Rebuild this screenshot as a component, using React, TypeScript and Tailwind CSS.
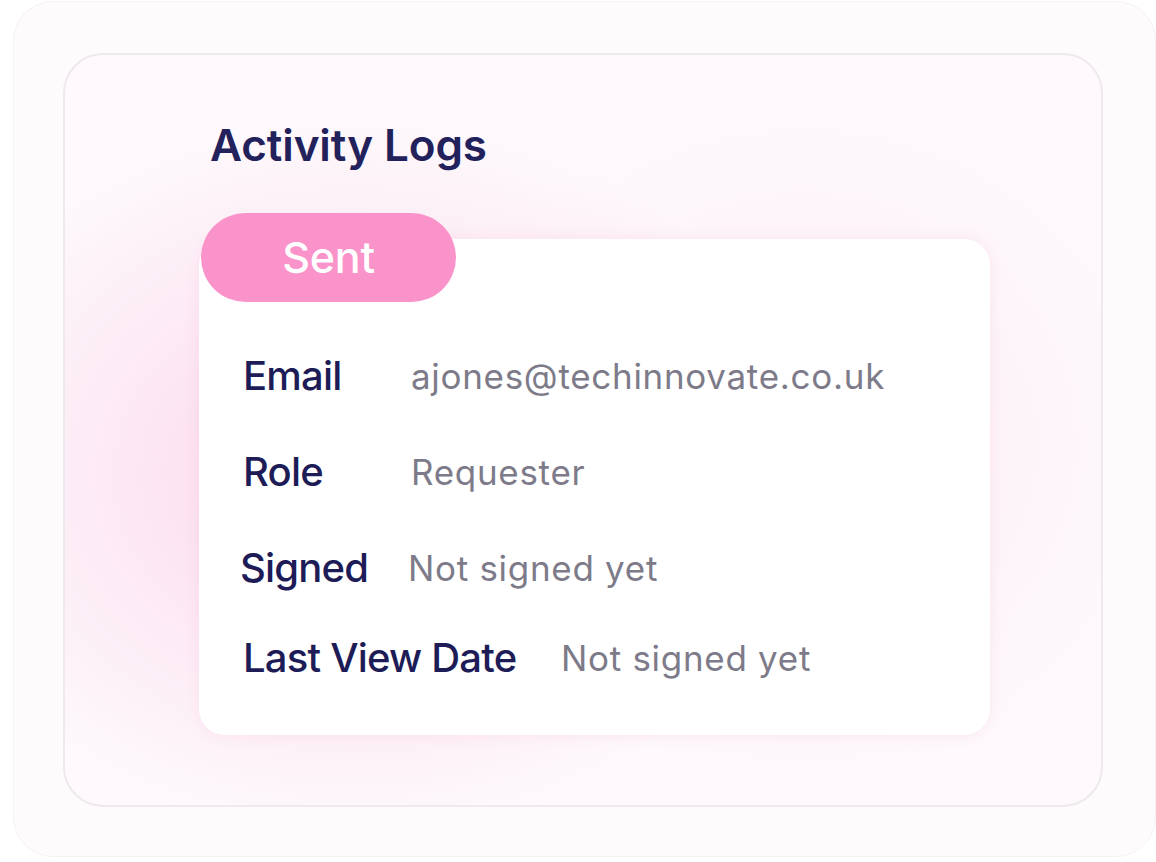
const rows = [
  { label: 'Email', value: 'ajones@techinnovate.co.uk', labelCls: 'w-[171px] pl-[3px]', rowCls: 'h-[96px]' },
  { label: 'Role', value: 'Requester', labelCls: 'w-[171px] pl-[3px]', rowCls: 'h-[96px]' },
  { label: 'Signed', value: 'Not signed yet', labelCls: 'w-[168px]', rowCls: 'h-[96px]' },
  { label: 'Last View Date', value: 'Not signed yet', labelCls: 'w-[321px] pl-[3px]', rowCls: 'h-[84px]' },
];

export default function App() {
  return (
    <div className="w-[1156px] h-[862px] bg-white pl-[13px] pt-[1px] font-['Inter','Liberation_Sans',sans-serif]">
      <div className="w-[1143px] h-[856px] rounded-[40px] border border-[#f6f1f4] bg-[#fefbfd] pl-[49px] pt-[51px]">
        <div className="relative w-[1040px] h-[754px] rounded-[40px] border-2 border-[#efe9ed] bg-[#fdf9fc] overflow-hidden">
          {/* pink glow behind card */}
          <div className="absolute left-[-160px] top-[60px] w-[900px] h-[720px] rounded-full bg-[radial-gradient(closest-side,rgba(251,200,226,0.75),rgba(252,214,234,0.45)_55%,rgba(253,240,247,0)_100%)]" />
          <div className="absolute left-[360px] top-[40px] w-[760px] h-[700px] rounded-full bg-[radial-gradient(closest-side,rgba(252,222,238,0.45),rgba(253,240,247,0)_100%)]" />
          <div className="relative pl-[145px] pt-[60px]">
            <h1 className="text-[44px] leading-[60px] font-semibold text-[#22215b] tracking-[-0.1px]">
              Activity Logs
            </h1>
            <div className="relative mt-[64px] ml-[-11px] w-[791px]">
              <div className="absolute left-[2px] top-[-26px] w-[255px] h-[89px] rounded-full bg-[#f993c9] flex items-center justify-center">
                <span className="text-[43px] font-medium text-white tracking-[-0.2px]">Sent</span>
              </div>
              <div className="h-[496px] rounded-[26px] bg-white shadow-[0_0_14px_rgba(249,170,214,0.22)] pl-[41px] pt-[89px]">
                <div className="flex flex-col">
                  {rows.map((r) => (
                    <div key={r.label} className={`flex items-center ${r.rowCls}`}>
                      <span className={`${r.labelCls} text-[40px] font-medium text-[#1d1c57] tracking-[-0.8px] whitespace-nowrap`}>
                        {r.label}
                      </span>
                      <span className="text-[35px] text-[#7d7b89] tracking-[0.7px] whitespace-nowrap">{r.value}</span>
                    </div>
                  ))}
                </div>
              </div>
            </div>
          </div>
        </div>
      </div>
    </div>
  );
}
